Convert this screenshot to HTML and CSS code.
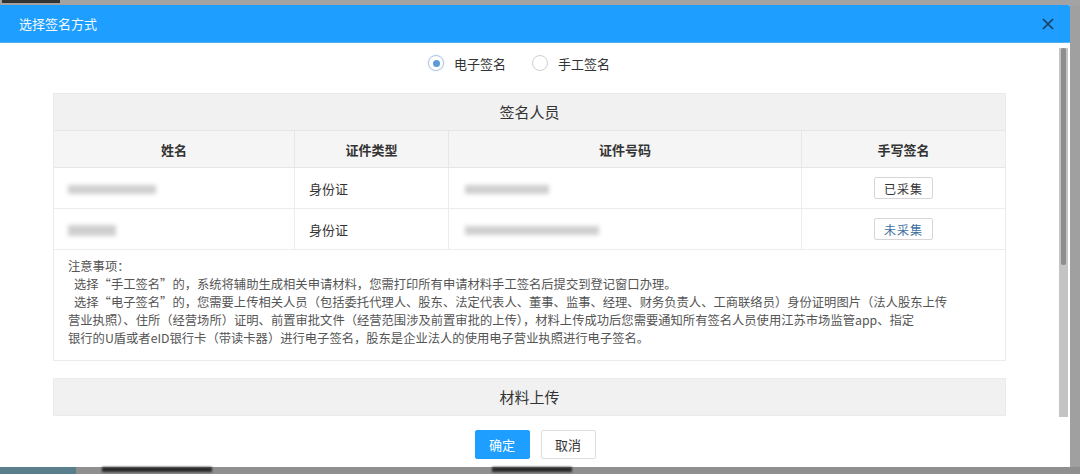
FILE: index.html
```html
<!DOCTYPE html>
<html lang="zh-CN">
<head>
    <meta charset="UTF-8">
    <title>选择签名方式</title>
    <link rel="stylesheet" href="styles.css">
</head>
<body>
    <div class="backdrop-top"><span class="bg-mark"></span></div>
    <div class="stage">
        <div class="dialog">
            <div class="dialog-header">
                <span class="dialog-title">选择签名方式</span>
                <svg class="close-icon" width="12" height="12" viewBox="0 0 12 12">
                    <path d="M1 1 L11 11 M11 1 L1 11" stroke="#1d3b57" stroke-width="1.6" fill="none"/>
                </svg>
            </div>
            <div class="dialog-body">
                <div class="body-content">
                    <div class="radio-row">
                        <label class="radio checked"><span class="radio-dot"></span>电子签名</label>
                        <label class="radio"><span class="radio-dot"></span>手工签名</label>
                    </div>

                    <div class="panel">
                        <div class="panel-title">签名人员</div>
                        <table class="sign-table">
                            <thead>
                                <tr>
                                    <th class="col-name">姓名</th>
                                    <th class="col-type">证件类型</th>
                                    <th class="col-no">证件号码</th>
                                    <th class="col-sign">手写签名</th>
                                </tr>
                            </thead>
                            <tbody>
                                <tr>
                                    <td><span class="blur blur-name1"></span></td>
                                    <td>身份证</td>
                                    <td><span class="blur blur-no1"></span></td>
                                    <td class="center"><button class="small-btn">已采集</button></td>
                                </tr>
                                <tr>
                                    <td><span class="blur blur-name2"></span></td>
                                    <td>身份证</td>
                                    <td><span class="blur blur-no2"></span></td>
                                    <td class="center"><button class="small-btn blue">未采集</button></td>
                                </tr>
                            </tbody>
                        </table>
                        <div class="notes">
                            <p>注意事项：</p>
                            <p class="indent">选择“手工签名”的，系统将辅助生成相关申请材料，您需打印所有申请材料手工签名后提交到登记窗口办理。</p>
                            <p class="indent">选择“电子签名”的，您需要上传相关人员（包括委托代理人、股东、法定代表人、董事、监事、经理、财务负责人、工商联络员）身份证明图片（法人股东上传<br>营业执照）、住所（经营场所）证明、前置审批文件（经营范围涉及前置审批的上传），材料上传成功后您需要通知所有签名人员使用江苏市场监管app、指定<br>银行的U盾或者eID银行卡（带读卡器）进行电子签名，股东是企业法人的使用电子营业执照进行电子签名。</p>
                        </div>
                    </div>

                    <div class="panel upload">
                        <div class="panel-title">材料上传</div>
                    </div>
                </div>
                <div class="scrollbar">
                    <div class="scroll-track"><div class="scroll-thumb"></div></div>
                </div>
            </div>
            <div class="dialog-footer">
                <button class="btn primary">确定</button>
                <button class="btn">取消</button>
            </div>
        </div>
        <div class="side-strip"></div>
    </div>
    <div class="backdrop-bottom">
        <span class="bg-tab"></span>
        <span class="bg-dark w1"></span>
        <span class="bg-dark w2"></span>
    </div>
</body>
</html>
```

FILE: styles.css
```css
body {
    margin: 0;
    padding: 0;
    background-color: #9c9c9c;
    font-family: "Noto Sans CJK SC", "Liberation Sans", sans-serif;
    width: 1080px;
    height: 474px;
    overflow: hidden;
}
.backdrop-top {
    height: 5px;
    overflow: hidden;
    background-color: #a3a3a3;
}
.bg-mark {
    display: block;
    width: 58px;
    height: 3px;
    margin-left: 2px;
    background-color: #333;
    filter: blur(0.6px);
}
.stage {
    display: flex;
    height: 462px;
}
.dialog {
    width: 1070px;
    height: 462px;
    background-color: white;
    display: flex;
    flex-direction: column;
    border-top-right-radius: 2px;
}
.dialog-header {
    height: 37px;
    background-color: #1e9fff;
    border-bottom: 1px solid #4fb0f5;
    display: flex;
    align-items: center;
    justify-content: space-between;
    padding: 0 16px 0 19px;
    border-top-right-radius: 2px;
}
.dialog-title {
    color: #f4f9ff;
    font-size: 13px;
}
.close-icon {
    display: block;
}
.dialog-body {
    height: 377px;
    display: flex;
    overflow: hidden;
}
.body-content {
    width: 1059px;
}
.radio-row {
    height: 40px;
    display: flex;
    align-items: center;
    padding-left: 428px;
    gap: 26px;
}
.radio {
    display: flex;
    align-items: center;
    font-size: 13px;
    color: #333;
}
.radio-dot {
    width: 16px;
    height: 16px;
    border: 1px solid #cfcfcf;
    border-radius: 50%;
    margin-right: 10px;
    box-sizing: border-box;
    display: flex;
    align-items: center;
    justify-content: center;
}
.radio.checked .radio-dot {
    border-color: #a9c6e4;
    box-shadow: 0 0 2px #cfe0f2;
}
.radio.checked .radio-dot::after {
    content: "";
    width: 7px;
    height: 7px;
    border-radius: 50%;
    background-color: #5d9bd8;
}
.panel {
    margin: 10px 0 0 53px;
    width: 953px;
    border: 1px solid #ebebeb;
    box-sizing: border-box;
}
.panel-title {
    height: 36px;
    line-height: 36px;
    background-color: #f1f1f1;
    text-align: center;
    font-size: 15px;
    color: #333;
    border-bottom: 1px solid #e6e6e6;
}
.sign-table {
    width: 100%;
    border-collapse: collapse;
    font-size: 13px;
    color: #333;
}
.sign-table th {
    height: 36px;
    background-color: #f5f5f5;
    font-weight: bold;
    font-size: 13px;
    color: #333;
    border-right: 1px solid #e6e6e6;
    border-bottom: 1px solid #e6e6e6;
    padding: 0;
}
.sign-table td {
    height: 40px;
    padding: 0 14px;
    border-right: 1px solid #ececec;
    border-bottom: 1px solid #ececec;
}
.sign-table th:last-child,
.sign-table td:last-child {
    border-right: none;
}
.col-name { width: 240px; }
.col-type { width: 153px; }
.col-no { width: 352px; }
.center {
    text-align: center;
}
.blur {
    display: inline-block;
    height: 9px;
    background-color: #cfcfcf;
    filter: blur(2px);
    vertical-align: middle;
}
.blur-name1 { width: 88px; }
.blur-name2 { width: 48px; height: 11px; }
.blur-no1 { width: 84px; margin-left: 2px; }
.blur-no2 { width: 134px; margin-left: 2px; }
.small-btn {
    font-family: inherit;
    font-size: 12px;
    color: #333;
    background-color: white;
    border: 1px solid #d6d6d6;
    border-radius: 2px;
    width: 59px;
    height: 22px;
    padding: 0;
    letter-spacing: 1px;
}
.small-btn.blue {
    color: #3c6e9e;
}
.notes {
    padding: 7px 10px 13px 14px;
    font-size: 12.3px;
    color: #555;
    line-height: 18px;
    white-space: nowrap;
}
.notes p {
    margin: 0;
}
.notes .indent {
    text-indent: 6px;
}
.panel.upload {
    margin-top: 17px;
}
.panel.upload .panel-title {
    border-bottom: none;
}
.scrollbar {
    width: 11px;
    padding-top: 5px;
}
.scroll-track {
    width: 9px;
    height: 369px;
    background-color: #c4c4c4;
    padding-left: 2px;
    box-sizing: border-box;
}
.scroll-thumb {
    width: 5px;
    height: 217px;
    background-color: #8e8e8e;
    border-radius: 2px;
}
.dialog-footer {
    height: 47px;
    display: flex;
    justify-content: center;
    gap: 11px;
    padding-top: 10px;
    box-sizing: border-box;
}
.btn {
    font-family: inherit;
    font-size: 13px;
    width: 55px;
    height: 29px;
    border: 1px solid #dedede;
    border-radius: 2px;
    background-color: white;
    color: #333;
    padding: 0;
}
.btn.primary {
    background-color: #1e9fff;
    border-color: #1e9fff;
    color: white;
}
.side-strip {
    width: 10px;
    background-color: #a0a0a0;
}
.backdrop-bottom {
    height: 7px;
    display: flex;
    background-color: #8f8f8f;
}
.bg-tab {
    width: 76px;
    background-color: #5a7f8c;
}
.bg-dark {
    height: 5px;
    background-color: #2a2a2a;
    filter: blur(1px);
}
.bg-dark.w1 {
    width: 110px;
    margin-left: 26px;
}
.bg-dark.w2 {
    width: 80px;
    margin-left: 280px;
}
```
